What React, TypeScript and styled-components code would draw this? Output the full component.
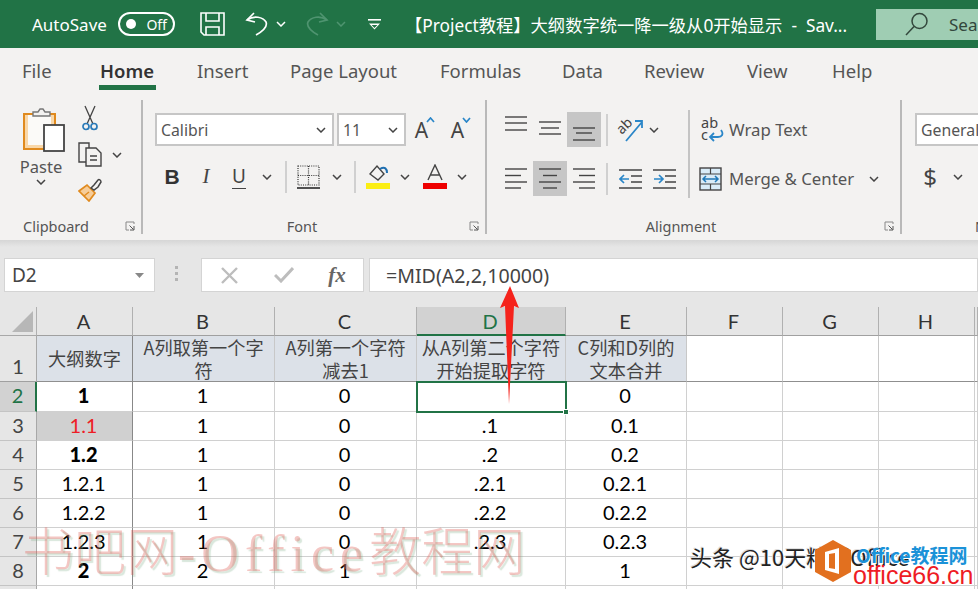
import React from 'react';
import styled, { createGlobalStyle } from 'styled-components';

const UI_FONT = '"Noto Sans", "Noto Sans CJK SC", sans-serif';
const CELL_FONT = 'Lato, "Noto Sans CJK SC", sans-serif';
const GREEN = '#217346';

const GlobalStyle = createGlobalStyle`
  html, body { margin: 0; padding: 0; background: #fff; }
`;

const Page = styled.div`
  position: relative;
  width: 978px;
  height: 589px;
  overflow: hidden;
  font-family: ${UI_FONT};
`;

/* title bar */
const TitleBar = styled.div`
  display: flex;
  align-items: center;
  height: 48px;
  padding-left: 32px;
  background: ${GREEN};
  color: #fff;
  white-space: nowrap;
`;

const AutoSave = styled.span`
  flex: none;
  width: 86px;
  font-size: 17px;
`;

const Toggle = styled.div`
  display: flex;
  flex: none;
  align-items: center;
  justify-content: space-between;
  box-sizing: border-box;
  width: 57px;
  height: 24px;
  padding: 0 6px 0 6px;
  border: 2px solid #fff;
  border-radius: 12px;
  font-size: 14px;
  &::before {
    content: '';
    width: 10px;
    height: 10px;
    border-radius: 50%;
    background: #fff;
  }
`;

const Slot = styled.div<{ $left: number; $width: number }>`
  display: flex;
  align-items: center;
  justify-content: center;
  flex: none;
  margin-left: ${(p) => p.$left}px;
  width: ${(p) => p.$width}px;
`;

const DocTitle = styled.span`
  flex: none;
  width: 471px;
  margin-left: 24px;
  font-size: 17.3px;
`;

const SearchBox = styled.div`
  display: flex;
  flex: none;
  align-items: center;
  gap: 20px;
  width: 102px;
  box-sizing: border-box;
  height: 31px;
  padding-left: 29px;
  background: #9fcdb3;
  color: #33473c;
  font-size: 17px;
  overflow: hidden;
`;

/* tabs */
const TabBar = styled.div`
  display: flex;
  height: 47px;
  padding-left: 22px;
  background: #f3f2f1;
`;

const Tab = styled.div<{ $width: number; $active?: boolean }>`
  position: relative;
  flex: none;
  width: ${(p) => p.$width}px;
  padding-top: 8px;
  color: ${(p) => (p.$active ? '#333' : '#555')};
  font-size: 18.5px;
  font-weight: ${(p) => (p.$active ? 600 : 400)};
  line-height: 30px;
  white-space: nowrap;
  &::after {
    content: '';
    display: ${(p) => (p.$active ? 'block' : 'none')};
    position: absolute;
    left: -1px;
    top: 37px;
    width: 57px;
    height: 5px;
    background: ${GREEN};
  }
`;

/* ribbon */
const Ribbon = styled.div`
  display: flex;
  height: 145px;
  padding-top: 5px;
  box-sizing: border-box;
  background: #f3f2f1;
  overflow: hidden;
`;

const Group = styled.section<{ $width: number; $last?: boolean }>`
  display: flex;
  flex: none;
  flex-direction: column;
  box-sizing: border-box;
  width: ${(p) => p.$width}px;
  height: 134px;
  border-right: ${(p) => (p.$last ? 'none' : '2px solid #b9b9b9')};
`;

const GroupBody = styled.div<{ $left: number }>`
  display: flex;
  flex: none;
  height: 118px;
  padding-left: ${(p) => p.$left}px;
`;

const GroupFoot = styled.div`
  position: relative;
  flex: none;
  height: 16px;
  color: #555;
  font-size: 14.5px;
  line-height: 16px;
  text-align: center;
`;

const GroupLabel = styled.span<{ $shift?: number; $start?: boolean }>`
  display: block;
  margin-left: ${(p) => p.$shift || 0}px;
  text-align: ${(p) => (p.$start ? 'left' : 'center')};
  white-space: nowrap;
`;

const Launcher = styled.svg`
  position: absolute;
  right: 6px;
  top: 3px;
`;

const PasteColumn = styled.div`
  display: flex;
  flex: none;
  flex-direction: column;
  align-items: center;
  width: 46px;
  margin-right: 14px;
  padding-top: 7px;
  color: #555;
  font-size: 16.5px;
  line-height: 24px;
  & > svg:first-child {
    margin-left: 7px;
  }
`;

const PasteLabel = styled.span`
  margin-top: 3px;
`;

const ClipTools = styled.div`
  display: flex;
  flex-direction: column;
  align-items: flex-start;
`;

const ClipRow = styled.div<{ $gap?: number; $top?: number }>`
  display: flex;
  align-items: center;
  gap: ${(p) => p.$gap || 0}px;
  margin-top: ${(p) => p.$top || 0}px;
`;

const ToolStack = styled.div<{ $gap?: number }>`
  display: flex;
  flex-direction: column;
  gap: ${(p) => p.$gap || 14}px;
  padding-top: 13px;
`;

const ToolRow = styled.div`
  display: flex;
  align-items: center;
  height: 33px;
`;

const Combo = styled.div<{ $width: number; $left?: number }>`
  display: flex;
  flex: none;
  align-items: center;
  justify-content: space-between;
  box-sizing: border-box;
  width: ${(p) => p.$width}px;
  height: 33px;
  margin-left: ${(p) => p.$left || 0}px;
  padding: 0 6px 0 4px;
  border: 2px solid #c6c6c6;
  background: #fff;
  color: #555;
  font-size: 15.8px;
`;

const IconCell = styled.div<{ $width: number; $active?: boolean; $end?: number }>`
  display: flex;
  flex: none;
  align-items: center;
  justify-content: ${(p) => (p.$end !== undefined ? 'flex-end' : 'center')};
  box-sizing: border-box;
  width: ${(p) => p.$width}px;
  height: 35px;
  padding-right: ${(p) => p.$end || 0}px;
  background: ${(p) => (p.$active ? '#c6c6c6' : 'transparent')};
  color: #444;
`;

const BoldB = styled.span`
  color: #333;
  font-family: "Liberation Sans", sans-serif;
  font-size: 21px;
  font-weight: 700;
`;

const ItalicI = styled.span`
  color: #444;
  font-family: "Liberation Serif", serif;
  font-size: 21px;
  font-style: italic;
`;

const UnderU = styled.span`
  color: #444;
  font-size: 19px;
  line-height: 23px;
  border-bottom: 1.5px solid #444;
`;

const BigA = styled.span`
  margin-right: -2px;
  color: #444;
  font-size: 21px;
  line-height: 24px;
`;

const ToolDivider = styled.div`
  flex: none;
  width: 2px;
  height: 32px;
  background: #d0d0d0;
`;

const TallDivider = styled.div`
  flex: none;
  align-self: flex-start;
  width: 2px;
  height: 88px;
  margin: 10px 0 0 7px;
  background: #c4c4c4;
`;

const ActionText = styled.span`
  color: #555;
  font-size: 16.8px;
  white-space: nowrap;
`;

const Dollar = styled.span`
  color: #444;
  font-size: 24px;
`;

/* formula bar */
const FormulaArea = styled.div`
  display: flex;
  align-items: flex-start;
  box-sizing: border-box;
  height: 67px;
  padding: 18px 0 0 4px;
  background: linear-gradient(#d6d6d6, #e6e6e6 7px);
`;

const FieldBox = styled.div<{ $width?: number; $left?: number }>`
  display: flex;
  flex: ${(p) => (p.$width ? 'none' : 1)};
  align-items: center;
  box-sizing: border-box;
  width: ${(p) => (p.$width ? `${p.$width}px` : 'auto')};
  height: 34px;
  margin-left: ${(p) => p.$left || 0}px;
  border: 1px solid #d4d4d4;
  background: #fff;
  color: #444;
  font-size: 19px;
`;

const NameText = styled.span`
  flex: 1;
  padding-left: 7px;
`;

const NameCaret = styled.svg`
  margin-right: 10px;
`;

const Grip = styled.div`
  display: flex;
  flex: none;
  flex-direction: column;
  gap: 3px;
  width: 4px;
  margin: 8px 22px 0 20px;
  & > i {
    width: 3px;
    height: 3px;
    background: #b4b4b4;
  }
`;

const FxCell = styled.div<{ $width: number }>`
  display: flex;
  align-items: center;
  justify-content: center;
  width: ${(p) => p.$width}px;
`;

const FxText = styled.span`
  color: #666;
  font-family: "Liberation Serif", serif;
  font-size: 21px;
  font-style: italic;
  font-weight: 700;
`;

const FormulaText = styled.span`
  padding-left: 16px;
  font-size: 19.6px;
`;

/* sheet */
const Sheet = styled.div`
  display: grid;
  grid-template-columns: 37px 96px 142px 142px 149px 121px 96px 96px 96px 3px;
  grid-template-rows: 29px 46px 30px repeat(7, 29px);
  font-family: ${CELL_FONT};
`;

const Corner = styled.div`
  position: relative;
  border-right: 1px solid #b0b0b0;
  border-bottom: 1px solid #a8a8a8;
  background: #e6e6e6;
  &::after {
    content: '';
    position: absolute;
    left: 12px;
    top: 4px;
    border-style: solid;
    border-width: 0 0 21px 21px;
    border-color: transparent transparent #b7b7b7 transparent;
  }
`;

const ColHead = styled.div<{ $active?: boolean }>`
  display: flex;
  align-items: center;
  justify-content: center;
  box-sizing: border-box;
  padding-right: 2px;
  border-right: 1px solid #b0b0b0;
  border-bottom: ${(p) => (p.$active ? `2px solid ${GREEN}` : '1px solid #a0a0a0')};
  background: ${(p) => (p.$active ? '#d2d2d2' : '#e6e6e6')};
  color: ${(p) => (p.$active ? GREEN : '#333')};
  font-size: 20px;
`;

const RowHead = styled.div<{ $active?: boolean; $tall?: boolean }>`
  display: flex;
  align-items: ${(p) => (p.$tall ? 'flex-end' : 'center')};
  justify-content: center;
  box-sizing: border-box;
  padding-bottom: ${(p) => (p.$tall ? 0 : 2)}px;
  border-right: ${(p) => (p.$active ? `2px solid ${GREEN}` : '1px solid #a8a8a8')};
  border-bottom: 1px solid ${(p) => (p.$tall ? '#a0a0a0' : '#c4c4c4')};
  background: ${(p) => (p.$active ? '#d2d2d2' : '#e6e6e6')};
  color: ${(p) => (p.$active ? GREEN : '#444')};
  font-size: 20px;
  line-height: 29px;
`;

const HeadCell = styled.div<{ $filled?: boolean; $heavy?: boolean }>`
  display: flex;
  align-items: center;
  justify-content: center;
  box-sizing: border-box;
  border-right: 1px solid ${(p) => (p.$heavy ? '#888' : '#c8c8c8')};
  border-bottom: 1px solid #8f8f8f;
  background: ${(p) => (p.$filled ? '#dce1e8' : '#fff')};
  color: #444;
  font-family: "Noto Sans CJK SC", sans-serif;
  font-size: 18.2px;
  line-height: 23px;
  text-align: center;
`;

const Cell = styled.div<{ $bold?: boolean; $red?: boolean; $shaded?: boolean; $heavy?: boolean; $selected?: boolean }>`
  position: relative;
  display: flex;
  align-items: center;
  justify-content: center;
  box-sizing: border-box;
  padding: 0 2px 3px 0;
  border-right: 1px solid ${(p) => (p.$heavy ? '#888' : '#d0d0d0')};
  border-bottom: 1px solid #d0d0d0;
  background: ${(p) => (p.$shaded ? '#d0d0d0' : '#fff')};
  color: ${(p) => (p.$red ? '#ee1c25' : '#000')};
  font-size: 20px;
  font-weight: ${(p) => (p.$bold ? 900 : 400)};
  line-height: 26px;
  outline: ${(p) => (p.$selected ? `2.5px solid ${GREEN}` : 'none')};
  outline-offset: -1px;
  z-index: ${(p) => (p.$selected ? 1 : 0)};
`;

const FillHandle = styled.i`
  position: absolute;
  right: -4px;
  bottom: -4px;
  width: 6px;
  height: 6px;
  background: ${GREEN};
  border: 1px solid #fff;
  box-sizing: border-box;
`;

/* things laid over the shot */
const Arrow = styled.svg`
  position: absolute;
  left: 495px;
  top: 284px;
  z-index: 3;
`;

const Watermark = styled.div`
  position: absolute;
  left: 22px;
  top: 515px;
  z-index: 2;
  color: rgba(222, 92, 82, 0.34);
  font-family: "Noto Sans CJK SC", "Liberation Serif", serif;
  font-size: 52px;
  font-weight: 300;
  line-height: 68px;
  text-shadow: 2px 2px 1px rgba(120, 170, 130, 0.28);
  white-space: nowrap;
`;

const WatermarkLatin = styled.span`
  font-family: "Liberation Serif", serif;
  letter-spacing: 6px;
`;

const Credit = styled.div`
  position: absolute;
  left: 690px;
  top: 541px;
  z-index: 2;
  color: #222;
  font-family: "Noto Sans CJK SC", sans-serif;
  font-size: 22px;
  line-height: 30px;
  text-shadow: 1px 1px 0 #fff, -1px -1px 0 #ddd;
  white-space: nowrap;
`;

const Logo = styled.svg`
  position: absolute;
  left: 815px;
  top: 540px;
  z-index: 3;
`;

const SiteName = styled.div`
  position: absolute;
  left: 856px;
  top: 543px;
  z-index: 3;
  color: #1b92d8;
  font-family: "Noto Sans CJK SC", sans-serif;
  font-size: 19px;
  font-weight: 700;
  line-height: 24px;
  white-space: nowrap;
  text-shadow: 1px 1px 0 #fff;
`;

const SiteUrl = styled.div`
  position: absolute;
  left: 853px;
  top: 561px;
  z-index: 3;
  color: #ee1c25;
  font-family: "Liberation Sans", sans-serif;
  font-size: 25px;
  line-height: 28px;
  white-space: nowrap;
  text-shadow: 1px 1px 0 #fff;
`;

/* icons */
const Chevron = ({ color = '#444' }: { color?: string }) => (
  <svg width="10" height="6" viewBox="0 0 10 6" fill="none" stroke={color} strokeWidth="1.5">
    <path d="M1 1l4 4 4-4" />
  </svg>
);

const SaveIcon = () => (
  <svg width="25" height="24" viewBox="0 0 25 24" fill="none" stroke="#fff" strokeWidth="1.6">
    <path d="M1 1h23v22H4l-3-3z" />
    <path d="M6 1v8h13V1M6 23v-8h13v8" />
  </svg>
);

const UndoIcon = ({ color = '#fff', flip }: { color?: string; flip?: boolean }) => (
  <svg width="24" height="24" viewBox="0 0 24 24" fill="none" stroke={color} strokeWidth="1.7" style={flip ? { transform: 'scaleX(-1)' } : undefined}>
    <path d="M9 1L2 8l8 2" />
    <path d="M2 8c7-5 16-3 19 2 2 5-3 9-10 13" />
  </svg>
);

const QatIcon = () => (
  <svg width="13" height="11" viewBox="0 0 13 11" fill="#fff">
    <rect x="0" y="0" width="13" height="1.6" />
    <path d="M1 4.5h11l-5.5 6zM3.6 6l2.9 3 2.9-3z" fillRule="evenodd" />
  </svg>
);

const SearchIcon = () => (
  <svg width="24" height="24" viewBox="0 0 24 24" fill="none" stroke="#33473c" strokeWidth="1.5" style={{ flex: 'none' }}>
    <circle cx="14.5" cy="9" r="7.5" />
    <path d="M9 14.5L1 23" />
  </svg>
);

const PasteIcon = () => (
  <svg width="43" height="45" viewBox="0 0 43 45">
    <path d="M1 7h31v35H1z" fill="#f9d7a8" stroke="#e08a1e" strokeWidth="2" />
    <path d="M5 8h23v30H5z" fill="#fbfaf8" />
    <path d="M10 9V5h5l2-3h3l2 3h5v4z" fill="#f3f2f1" stroke="#777" strokeWidth="1.4" />
    <rect x="21" y="18" width="20" height="26" fill="#fff" stroke="#444" strokeWidth="1.8" />
  </svg>
);

const ScissorsIcon = () => (
  <svg width="16" height="26" viewBox="0 0 16 26" fill="none">
    <path d="M3 1l8 18M13 1L5 19" stroke="#444" strokeWidth="1.3" />
    <circle cx="4" cy="21.5" r="3" stroke="#2a7ab8" strokeWidth="1.7" />
    <circle cx="12" cy="21.5" r="3" stroke="#2a7ab8" strokeWidth="1.7" />
  </svg>
);

const CopyIcon = () => (
  <svg width="25" height="25" viewBox="0 0 25 25" fill="none" stroke="#444" strokeWidth="1.4">
    <path d="M8 20H1V1h10l0 5" />
    <path d="M8 6h10l5 5v13H8z" fill="#f3f2f1" />
    <path d="M12 14h7M12 18h7" />
  </svg>
);

const PainterIcon = () => (
  <svg width="25" height="24" viewBox="0 0 25 24" fill="none">
    <path d="M1 13l8-6 8 8-6 8z" fill="#f6cd9a" stroke="#e08a1e" strokeWidth="1.7" />
    <path d="M6 18l5-4" stroke="#e08a1e" strokeWidth="1.4" />
    <path d="M13 10l3-3 4-5c1-1 3 0 3 2l-3 5-4 3z" fill="#f3f2f1" stroke="#444" strokeWidth="1.5" />
  </svg>
);

const CaretA = ({ up }: { up: boolean }) => (
  <svg width="9" height="6" viewBox="0 0 9 6" fill="none" stroke="#2a86c8" strokeWidth="1.7" style={{ alignSelf: 'flex-start', marginTop: 5 }}>
    <path d={up ? 'M1 5l3.5-4L8 5' : 'M1 1l3.5 4L8 1'} />
  </svg>
);

const BordersIcon = () => (
  <svg width="23" height="24" viewBox="0 0 23 24" fill="none">
    <path d="M1 1h21v19H1zM11.5 1v19M1 10.5h21" stroke="#333" strokeWidth="1.2" strokeDasharray="1 1.2" />
    <path d="M0 23h23" stroke="#333" strokeWidth="1.7" />
  </svg>
);

const FillIcon = () => (
  <svg width="24" height="25" viewBox="0 0 24 25">
    <path d="M4 10l7-8 7 8-6 6z" fill="#f3f2f1" stroke="#444" strokeWidth="1.4" />
    <path d="M14 5c5-3 7 0 7 4" fill="none" stroke="#1f6fb0" strokeWidth="2" />
    <rect x="0" y="19" width="24" height="6" fill="#fbee13" />
  </svg>
);

const FontColorIcon = () => (
  <svg width="24" height="25" viewBox="0 0 24 25">
    <path d="M5 16L12 1l7 15M7.5 11h9" fill="none" stroke="#444" strokeWidth="1.4" />
    <rect x="0" y="19" width="24" height="6" fill="#ee0000" />
  </svg>
);

const AlignIcon = ({ rows }: { rows: [number, number, number][] }) => (
  <svg width="24" height="30" viewBox="0 0 24 30" fill="none" stroke="#444" strokeWidth="1.4">
    {rows.map(([y, x1, x2], i) => (
      <path key={i} d={`M${x1} ${y}H${x2}`} />
    ))}
  </svg>
);

const OrientIcon = () => (
  <svg width="28" height="26" viewBox="0 0 28 26" fill="none">
    <text x="1" y="13" fontSize="14" fill="#444" fontFamily="Noto Sans" transform="rotate(-45 9 11)">ab</text>
    <path d="M9 24L25 5M18 4h7v7" stroke="#2a86c8" strokeWidth="1.8" />
  </svg>
);

const IndentIcon = ({ inward }: { inward: boolean }) => (
  <svg width="23" height="20" viewBox="0 0 23 20" fill="none" stroke="#444" strokeWidth="1.4">
    <path d="M0 1h23M12 7h11M12 13h11M0 19h23" />
    <path d={inward ? 'M1 10h9M5 6l-4 4 4 4' : 'M1 10h9M6 6l4 4-4 4'} stroke="#2a86c8" strokeWidth="1.7" />
  </svg>
);

const WrapIcon = () => (
  <svg width="24" height="26" viewBox="0 0 24 26" fill="none">
    <text x="0" y="11" fontSize="14.5" fill="#444" fontFamily="Noto Sans">ab</text>
    <text x="0" y="23" fontSize="14.5" fill="#444" fontFamily="Noto Sans">c</text>
    <path d="M20 13c3 4 1 7-3 7h-7M13 16l-4 4 4 4" stroke="#2a86c8" strokeWidth="1.8" />
  </svg>
);

const MergeIcon = () => (
  <svg width="23" height="24" viewBox="0 0 23 24" fill="none">
    <rect x="1" y="1" width="21" height="22" fill="#d9ecf8" stroke="#444" strokeWidth="1.4" />
    <path d="M1 7h21M1 17h21M11.5 1v6M11.5 17v6" stroke="#444" strokeWidth="1.2" />
    <path d="M4 12h15M7 9l-3 3 3 3M16 9l3 3-3 3" stroke="#1f78b8" strokeWidth="1.5" />
  </svg>
);

const LauncherIcon = () => (
  <Launcher width="10" height="10" viewBox="0 0 10 10" fill="none" stroke="#888">
    <path d="M9 3V1H1v8h3" />
    <path d="M4.5 4.5l4 4M9 5v4H5" stroke="#555" />
  </Launcher>
);

type Bar = [number, number, number];

const TOP_ALIGN: Bar[] = [[2, 1, 23], [8, 1, 23], [15, 1, 23]];
const MID_ALIGN: Bar[] = [[7, 1, 23], [13, 3, 21], [19, 1, 23]];
const BOTTOM_ALIGN: Bar[] = [[13, 1, 23], [18, 4, 20], [25, 1, 23]];
const LEFT_ALIGN: Bar[] = [[5, 1, 23], [11.5, 1, 17], [18, 1, 23], [24, 1, 17]];
const CENTER_ALIGN: Bar[] = [[5, 1, 23], [11.5, 5, 19], [18, 1, 23], [24, 5, 19]];
const RIGHT_ALIGN: Bar[] = [[5, 1, 23], [11.5, 7, 23], [18, 1, 23], [24, 7, 23]];

const COLUMNS = ['A', 'B', 'C', 'D', 'E', 'F', 'G', 'H', 'I'];

type RowData = { num: number; a: string; b: string; c: string; d: string; e: string; bold?: boolean; red?: boolean };

const ROWS: RowData[] = [
  { num: 2, a: '1', b: '1', c: '0', d: '', e: '0', bold: true },
  { num: 3, a: '1.1', b: '1', c: '0', d: '.1', e: '0.1', red: true },
  { num: 4, a: '1.2', b: '1', c: '0', d: '.2', e: '0.2', bold: true },
  { num: 5, a: '1.2.1', b: '1', c: '0', d: '.2.1', e: '0.2.1' },
  { num: 6, a: '1.2.2', b: '1', c: '0', d: '.2.2', e: '0.2.2' },
  { num: 7, a: '1.2.3', b: '1', c: '0', d: '.2.3', e: '0.2.3' },
  { num: 8, a: '2', b: '2', c: '1', d: '', e: '1', bold: true },
  { num: 9, a: '', b: '', c: '', d: '', e: '' },
];

const HEADERS = [
  ['大纲数字'],
  ['A列取第一个字', '符'],
  ['A列第一个字符', '减去1'],
  ['从A列第二个字符', '开始提取字符'],
  ['C列和D列的', '文本合并'],
];

const TABS: [string, number][] = [
  ['File', 78],
  ['Home', 97],
  ['Insert', 93],
  ['Page Layout', 150],
  ['Formulas', 122],
  ['Data', 82],
  ['Review', 103],
  ['View', 85],
  ['Help', 60],
];

export default function App() {
  return (
    <Page>
      <GlobalStyle />
      <TitleBar>
        <AutoSave>AutoSave</AutoSave>
        <Toggle>Off</Toggle>
        <Slot $left={25} $width={25}><SaveIcon /></Slot>
        <Slot $left={20} $width={24}><UndoIcon /></Slot>
        <Slot $left={7} $width={10}><Chevron color="#fff" /></Slot>
        <Slot $left={19} $width={24}><UndoIcon color="#4f9470" flip /></Slot>
        <Slot $left={7} $width={10}><Chevron color="#4f9470" /></Slot>
        <Slot $left={22} $width={13}><QatIcon /></Slot>
        <DocTitle>【Project教程】大纲数字统一降一级从0开始显示 &nbsp;-&nbsp; Sav...</DocTitle>
        <SearchBox><SearchIcon />Search</SearchBox>
      </TitleBar>

      <TabBar>
        {TABS.map(([name, width]) => (
          <Tab key={name} $width={width} $active={name === 'Home'}>{name}</Tab>
        ))}
      </TabBar>

      <Ribbon>
        <Group $width={143}>
          <GroupBody $left={18}>
            <PasteColumn>
              <PasteIcon />
              <PasteLabel>Paste</PasteLabel>
              <Chevron />
            </PasteColumn>
            <ClipTools>
              <ClipRow><IconCell $width={24}><ScissorsIcon /></IconCell></ClipRow>
              <ClipRow $top={7} $gap={9}><CopyIcon /><Chevron /></ClipRow>
              <ClipRow $top={11}><PainterIcon /></ClipRow>
            </ClipTools>
          </GroupBody>
          <GroupFoot>
            <GroupLabel $shift={-29}>Clipboard</GroupLabel>
            <LauncherIcon />
          </GroupFoot>
        </Group>

        <Group $width={344}>
          <GroupBody $left={12}>
            <ToolStack>
              <ToolRow>
                <Combo $width={179}>Calibri<Chevron /></Combo>
                <Combo $width={69} $left={3}>11<Chevron /></Combo>
                <IconCell $width={38}><BigA>A</BigA><CaretA up /></IconCell>
                <IconCell $width={34}><BigA>A</BigA><CaretA up={false} /></IconCell>
              </ToolRow>
              <ToolRow>
                <IconCell $width={34}><BoldB>B</BoldB></IconCell>
                <IconCell $width={34}><ItalicI>I</ItalicI></IconCell>
                <IconCell $width={32}><UnderU>U</UnderU></IconCell>
                <IconCell $width={24}><Chevron /></IconCell>
                <IconCell $width={14}><ToolDivider /></IconCell>
                <IconCell $width={30}><BordersIcon /></IconCell>
                <IconCell $width={28}><Chevron /></IconCell>
                <IconCell $width={8}><ToolDivider /></IconCell>
                <IconCell $width={38}><FillIcon /></IconCell>
                <IconCell $width={16}><Chevron /></IconCell>
                <IconCell $width={44}><FontColorIcon /></IconCell>
                <IconCell $width={10}><Chevron /></IconCell>
              </ToolRow>
            </ToolStack>
          </GroupBody>
          <GroupFoot>
            <GroupLabel $shift={-24}>Font</GroupLabel>
            <LauncherIcon />
          </GroupFoot>
        </Group>

        <Group $width={415}>
          <GroupBody $left={12}>
            <ToolStack $gap={16}>
              <ToolRow>
                <IconCell $width={34}><AlignIcon rows={TOP_ALIGN} /></IconCell>
                <IconCell $width={34}><AlignIcon rows={MID_ALIGN} /></IconCell>
                <IconCell $width={34} $active><AlignIcon rows={BOTTOM_ALIGN} /></IconCell>
                <IconCell $width={12}><ToolDivider /></IconCell>
                <IconCell $width={36}><OrientIcon /></IconCell>
                <IconCell $width={10}><Chevron /></IconCell>
              </ToolRow>
              <ToolRow>
                <IconCell $width={34}><AlignIcon rows={LEFT_ALIGN} /></IconCell>
                <IconCell $width={34} $active><AlignIcon rows={CENTER_ALIGN} /></IconCell>
                <IconCell $width={34}><AlignIcon rows={RIGHT_ALIGN} /></IconCell>
                <IconCell $width={12}><ToolDivider /></IconCell>
                <IconCell $width={34}><IndentIcon inward /></IconCell>
                <IconCell $width={34}><IndentIcon inward={false} /></IconCell>
              </ToolRow>
            </ToolStack>
            <TallDivider />
            <ToolStack $gap={16}>
              <ToolRow>
                <IconCell $width={39} $end={4}><WrapIcon /></IconCell>
                <ActionText>Wrap Text</ActionText>
              </ToolRow>
              <ToolRow>
                <IconCell $width={39} $end={7}><MergeIcon /></IconCell>
                <ActionText>Merge &amp; Center</ActionText>
                <IconCell $width={40}><Chevron /></IconCell>
              </ToolRow>
            </ToolStack>
          </GroupBody>
          <GroupFoot>
            <GroupLabel $shift={-25}>Alignment</GroupLabel>
            <LauncherIcon />
          </GroupFoot>
        </Group>

        <Group $width={76} $last>
          <GroupBody $left={13}>
            <ToolStack>
              <ToolRow>
                <Combo $width={90}>General</Combo>
              </ToolRow>
              <ToolRow>
                <IconCell $width={30}><Dollar>$</Dollar></IconCell>
                <IconCell $width={26}><Chevron /></IconCell>
              </ToolRow>
            </ToolStack>
          </GroupBody>
          <GroupFoot>
            <GroupLabel $shift={73} $start>Number</GroupLabel>
          </GroupFoot>
        </Group>
      </Ribbon>

      <FormulaArea>
        <FieldBox $width={151}>
          <NameText>D2</NameText>
          <NameCaret width="9" height="5" viewBox="0 0 9 5"><path d="M0 0h9L4.5 5z" fill="#888" /></NameCaret>
        </FieldBox>
        <Grip><i /><i /><i /></Grip>
        <FieldBox $width={163}>
          <FxCell $width={55}>
            <svg width="17" height="17" viewBox="0 0 17 17" fill="none" stroke="#bdbdbd" strokeWidth="2.4"><path d="M1 1l15 15M16 1L1 16" /></svg>
          </FxCell>
          <FxCell $width={54}>
            <svg width="20" height="16" viewBox="0 0 20 16" fill="none" stroke="#bdbdbd" strokeWidth="3"><path d="M1 8l6 6L19 1" /></svg>
          </FxCell>
          <FxCell $width={52}><FxText>fx</FxText></FxCell>
        </FieldBox>
        <FieldBox $left={5}>
          <FormulaText>=MID(A2,2,10000)</FormulaText>
        </FieldBox>
      </FormulaArea>

      <Sheet>
        <Corner />
        {COLUMNS.map((c) => (
          <ColHead key={c} $active={c === 'D'}>{c === 'I' ? '' : c}</ColHead>
        ))}

        <RowHead $tall>1</RowHead>
        {HEADERS.map((h, i) => (
          <HeadCell key={i} $filled $heavy={i === 0}>
            <span>
              {h.map((line, n) => (
                <div key={n}>{line}</div>
              ))}
            </span>
          </HeadCell>
        ))}
        <HeadCell /><HeadCell /><HeadCell /><HeadCell />

        {ROWS.map((r) => (
          <React.Fragment key={r.num}>
            <RowHead $active={r.num === 2}>{r.num}</RowHead>
            <Cell $heavy $bold={r.bold} $red={r.red} $shaded={r.red}>{r.a}</Cell>
            <Cell>{r.b}</Cell>
            <Cell>{r.c}</Cell>
            <Cell $selected={r.num === 2}>
              {r.d}
              {r.num === 2 ? <FillHandle /> : null}
            </Cell>
            <Cell>{r.e}</Cell>
            <Cell /><Cell /><Cell /><Cell />
          </React.Fragment>
        ))}
      </Sheet>

      <Arrow width="30" height="126" viewBox="0 0 30 126">
        <path d="M15 2L24 24 19 22 14 120 10 22 5 24z" fill="#f5231c" />
      </Arrow>

      <Watermark>书吧网<WatermarkLatin>-Office</WatermarkLatin>教程网</Watermark>
      <Credit>头条 @10天精通Office</Credit>
      <Logo width="36" height="42" viewBox="0 0 36 42">
        <path d="M18 0l18 10v22L18 42 0 32V10z" fill="#e2701f" />
        <path d="M10 12l14-4v26l-14-4zM14 14v14l6 1V13z" fill="#fff" fillRule="evenodd" />
      </Logo>
      <SiteName>Office教程网</SiteName>
      <SiteUrl>office66.cn</SiteUrl>
    </Page>
  );
}
